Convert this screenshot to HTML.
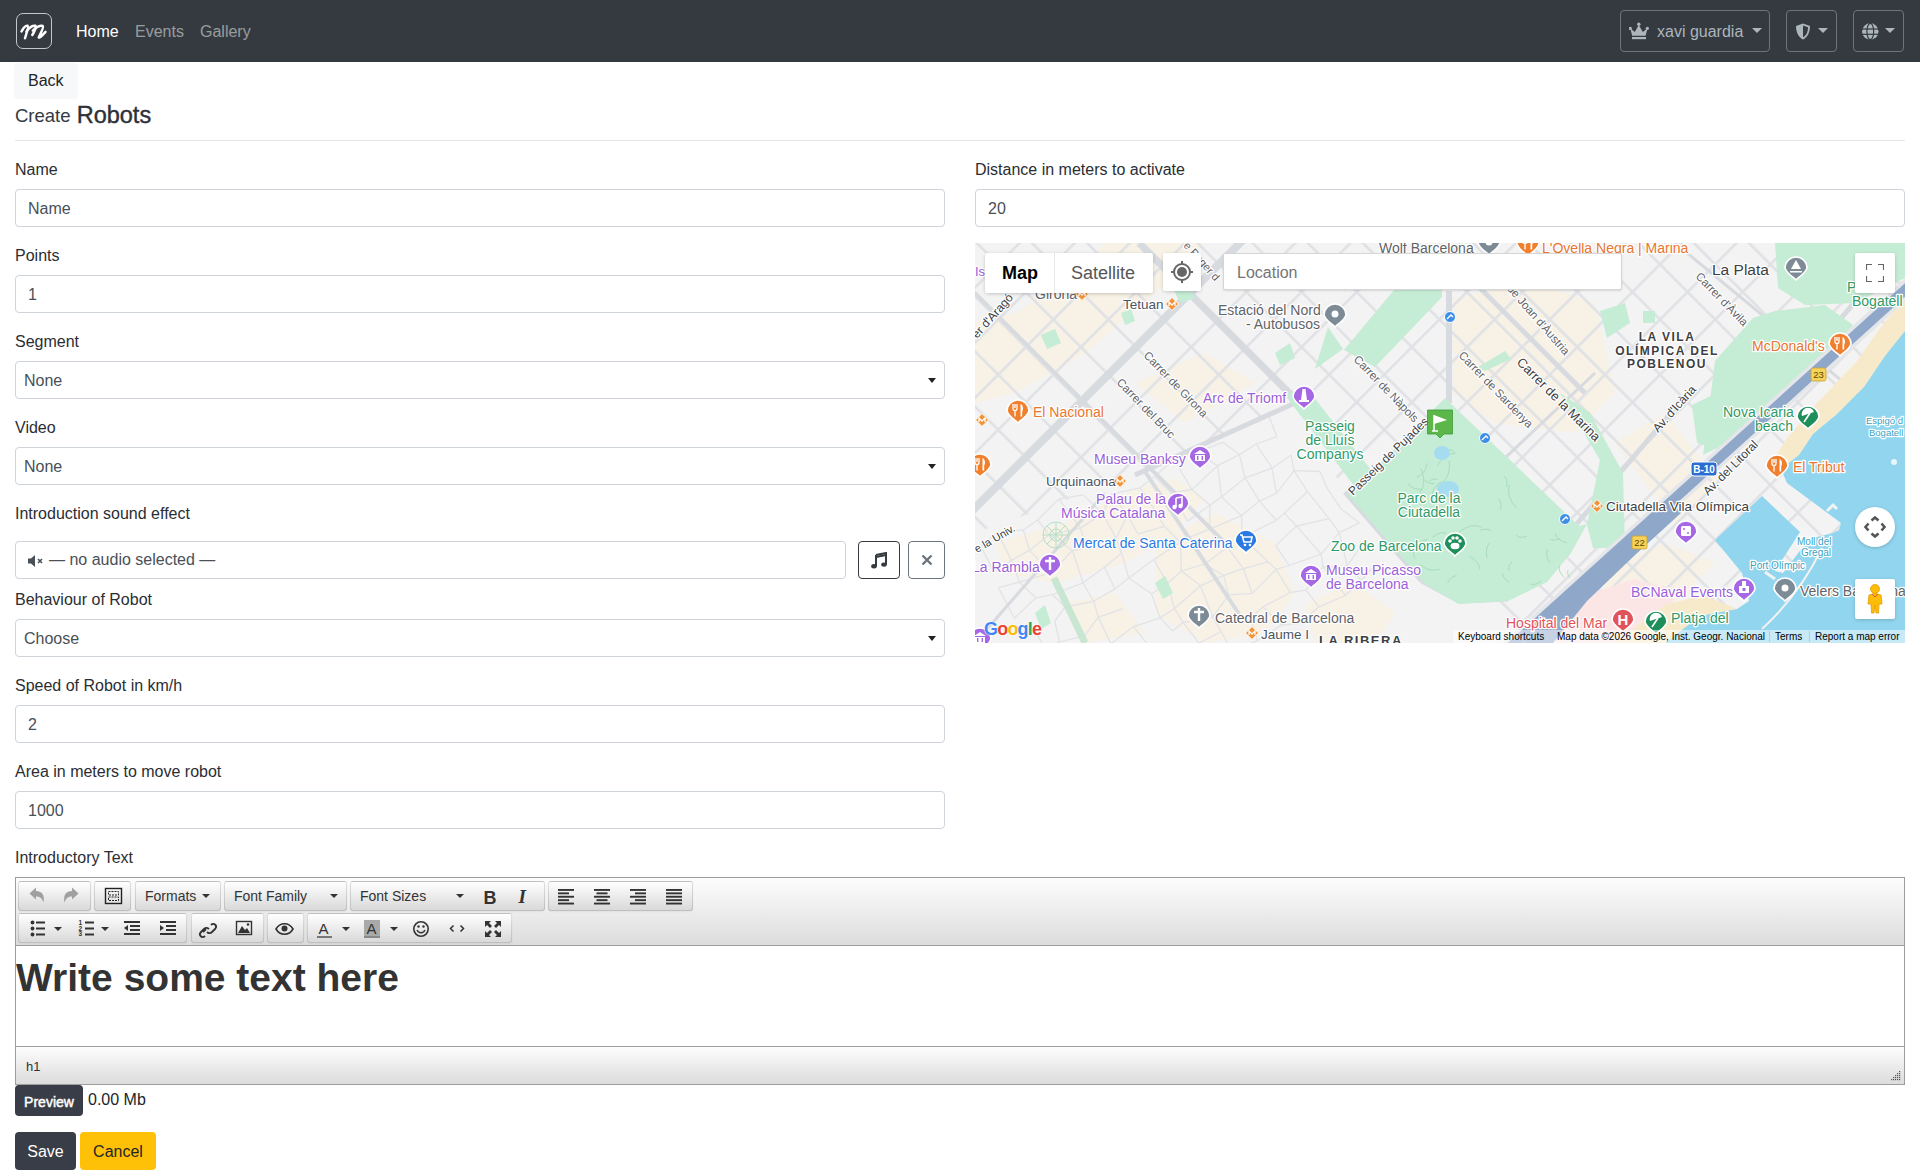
<!DOCTYPE html>
<html><head><meta charset="utf-8">
<style>
*{box-sizing:border-box;margin:0;padding:0}
html,body{width:1920px;height:1170px;overflow:hidden;background:#fff}
body{font-family:"Liberation Sans",sans-serif;color:#212529;font-size:16px;line-height:1.5;position:relative}
.abs{position:absolute}
#nav{position:absolute;left:0;top:0;width:1920px;height:62px;background:#343a40}
.logo{position:absolute;left:16px;top:13px;width:36px;height:36px;border:1.3px solid #c3c6ca;border-radius:7px}
.nl{position:absolute;top:20px;font-size:16px;line-height:24px;color:rgba(255,255,255,.5)}
.nbtn{position:absolute;top:10px;height:42px;border:1px solid #6c757d;border-radius:4px;color:#adb5bd}
.caret{position:absolute;width:0;height:0;border-left:5px solid transparent;border-right:5px solid transparent;border-top:5px solid #adb5bd}
.lbl{position:absolute;left:15px;font-size:16px;line-height:24px;color:#2a2e33;padding-top:1px}
.inp{position:absolute;height:38px;border:1px solid #ced4da;border-radius:4px;background:#fff;font-size:16px;line-height:24px;color:#495057;padding:7px 12px 5px 12px}
.sel{padding-left:8px}
.sarrow{position:absolute;right:8px;top:16px;width:0;height:0;border-left:4px solid transparent;border-right:4px solid transparent;border-top:5px solid #222}
</style></head><body>
<div id="nav">
  <div class="logo"><svg class="abs" style="left:-1px;top:-1px" width="36" height="36" viewBox="0 0 36 36"><g fill="none" stroke="#fff" stroke-linecap="round" stroke-width="2.5"><path d="M5.5,18.5 C7.5,14.5 10,12.2 11.8,12.8 C12.8,13.4 10.8,19.5 9,25.2"/><path d="M10.5,18.5 C13,14.5 17,12 19.5,12.8 C20.8,13.6 18.2,19 16.3,22"/><path d="M16.8,17.5 C20,14 24.5,12 26.8,13 C28.3,14 24.2,21 22.8,24.3 C23.5,25.5 26,22.5 29.5,18.8"/></g></svg></div>
  <div class="nl" style="left:76px;color:#fff">Home</div>
  <div class="nl" style="left:135px">Events</div>
  <div class="nl" style="left:200px">Gallery</div>
  <div class="nbtn" style="left:1620px;width:150px">
    <svg class="abs" style="left:8px;top:11px" width="21" height="18" viewBox="0 0 21 18"><path d="M1.2,6.3 L5.8,10 L9.8,3 L13.8,10 L18.5,6.3 L16.6,13.8 L3.2,13.8 Z" fill="#adb5bd"/><circle cx="1.3" cy="6.3" r="1.6" fill="#adb5bd"/><circle cx="9.8" cy="2.2" r="1.7" fill="#adb5bd"/><circle cx="18.4" cy="6.3" r="1.6" fill="#adb5bd"/><rect x="3" y="15" width="14" height="2.2" fill="#adb5bd"/></svg>
    <div class="abs" style="left:36px;top:9px;font-size:16px;line-height:24px">xavi guardia</div>
    <div class="caret" style="left:131px;top:17px"></div>
  </div>
  <div class="nbtn" style="left:1786px;width:51px">
    <svg class="abs" style="left:8px;top:11.5px" width="16" height="17" viewBox="0 0 16 17"><path d="M8 0.5 L15 3 C15 10 12 14.5 8 16.5 C4 14.5 1 10 1 3 Z" fill="#adb5bd"/><path d="M8 2.5 L13 4.3 C13 9.5 11 12.8 8 14.3 Z" fill="#343a40"/></svg>
    <div class="caret" style="left:31px;top:17px"></div>
  </div>
  <div class="nbtn" style="left:1853px;width:51px">
    <svg class="abs" style="left:8px;top:11.5px" width="17" height="17" viewBox="0 0 17 17"><circle cx="8.3" cy="8.5" r="8.2" fill="#adb5bd"/><g stroke="#343a40" stroke-width="1.2" fill="none"><ellipse cx="8.3" cy="8.5" rx="3.4" ry="8.2"/><line x1="0" y1="6" x2="17" y2="6"/><line x1="0" y1="11.3" x2="17" y2="11.3"/></g></svg>
    <div class="caret" style="left:31px;top:17px"></div>
  </div>
</div>

<div class="abs" style="left:14px;top:63px;width:64px;height:36px;background:#f7f8fa;border-radius:4px"></div>
<div class="abs" style="left:28px;top:69px;font-size:16px;line-height:24px;color:#212529">Back</div>
<div class="abs" style="left:15px;top:100px;font-size:18.5px;line-height:28px;color:#343a40;white-space:nowrap">Create <span style="font-size:23.5px;color:#2d3137;-webkit-text-stroke:0.4px #2d3137;position:relative;top:1px;left:1px">Robots</span></div>
<div class="abs" style="left:15px;top:140px;width:1890px;height:1px;background:#e3e5e7"></div>

<!-- left column -->
<div class="lbl" style="top:157px">Name</div>
<div class="inp" style="left:15px;top:189px;width:930px">Name</div>
<div class="lbl" style="top:243px">Points</div>
<div class="inp" style="left:15px;top:275px;width:930px">1</div>
<div class="lbl" style="top:329px">Segment</div>
<div class="inp sel" style="left:15px;top:361px;width:930px">None<span class="sarrow"></span></div>
<div class="lbl" style="top:415px">Video</div>
<div class="inp sel" style="left:15px;top:447px;width:930px">None<span class="sarrow"></span></div>
<div class="lbl" style="top:501px">Introduction sound effect</div>
<div class="inp" style="left:15px;top:541px;width:831px;padding-left:12px">
  <svg class="abs" style="left:12px;top:13px" width="17" height="12" viewBox="0 0 17 12"><path d="M0 3.5 H3 L7 0 V12 L3 8.5 H0 Z" fill="#495057"/><path d="M10 4 L14 8 M14 4 L10 8" stroke="#495057" stroke-width="1.6"/></svg>
  <span style="position:absolute;left:33px;top:6px">— no audio selected —</span>
</div>
<div class="abs" style="left:858px;top:541px;width:42px;height:38px;border:1px solid #343a40;border-radius:4px">
  <svg class="abs" style="left:12px;top:10px" width="17" height="17" viewBox="0 0 17 17"><path d="M5 3 L15 1 V12.5" fill="none" stroke="#343a40" stroke-width="2"/><path d="M5 3 V14" stroke="#343a40" stroke-width="2"/><ellipse cx="3" cy="14.2" rx="2.8" ry="2.2" fill="#343a40"/><ellipse cx="13" cy="12.6" rx="2.8" ry="2.2" fill="#343a40"/><path d="M5 5 L15 3" stroke="#343a40" stroke-width="2"/></svg>
</div>
<div class="abs" style="left:908px;top:541px;width:37px;height:38px;border:1px solid #6c757d;border-radius:4px">
  <svg class="abs" style="left:12px;top:12px" width="12" height="12" viewBox="0 0 12 12"><path d="M1.5 1.5 L10.5 10.5 M10.5 1.5 L1.5 10.5" stroke="#6c757d" stroke-width="2.4"/></svg>
</div>
<div class="lbl" style="top:587px">Behaviour of Robot</div>
<div class="inp sel" style="left:15px;top:619px;width:930px">Choose<span class="sarrow"></span></div>
<div class="lbl" style="top:673px">Speed of Robot in km/h</div>
<div class="inp" style="left:15px;top:705px;width:930px">2</div>
<div class="lbl" style="top:759px">Area in meters to move robot</div>
<div class="inp" style="left:15px;top:791px;width:930px">1000</div>
<div class="lbl" style="top:845px">Introductory Text</div>

<!-- right column -->
<div class="lbl" style="left:975px;top:157px">Distance in meters to activate</div>
<div class="inp" style="left:975px;top:189px;width:930px">20</div>

<div id="map" class="abs" style="left:975px;top:243px;width:930px;height:400px;background:#f1f2f3;overflow:hidden">
<svg width="930" height="400" viewBox="0 0 930 400" style="position:absolute;left:0;top:0;font-family:'Liberation Sans',sans-serif">
<defs>
<pattern id="grid" width="39" height="39" patternUnits="userSpaceOnUse" patternTransform="rotate(-45) translate(0,30.2)">
<rect x="0" y="0" width="39" height="2.6" fill="#dfe1e5"/>
<rect x="0" y="0" width="2.6" height="39" fill="#dfe1e5"/>
</pattern>
<clipPath id="eix"><polygon points="0,0 930,0 930,400 560,400 470,300 372,253 320,160 160,232 0,290"/></clipPath>
</defs>
<rect width="930" height="400" fill="#f4f3f3"/>
<g fill="#fbf1da" opacity="0.5">
<polygon points="0,80 40,70 90,40 130,0 230,0 180,50 110,110 40,150 0,160"/>
<polygon points="20,300 90,280 150,250 200,235 230,255 200,290 150,320 80,340 30,330"/>
<polygon points="180,300 240,270 300,300 320,350 290,390 230,400 180,370"/>
<polygon points="330,360 380,340 420,370 400,400 340,400"/>
<polygon points="90,360 140,350 170,390 110,400"/>
<polygon points="478,55 560,40 620,60 640,150 600,190 520,180 478,150"/>
<polygon points="640,200 690,170 745,240 700,280"/>
<polygon points="160,140 230,110 280,140 210,180"/>
<polygon points="820,190 870,150 900,130 860,200"/>
<polygon points="620,330 690,300 740,320 700,360 640,360"/>
</g>
<rect width="930" height="400" fill="url(#grid)" clip-path="url(#eix)"/>
<g stroke="#e1e3e6" stroke-width="1.3" fill="none">
<line x1="6.0" y1="303.6" x2="22.3" y2="289.1"/>
<line x1="6.0" y1="303.6" x2="19.0" y2="329.0"/>
<line x1="19.0" y1="329.0" x2="36.4" y2="317.4"/>
<line x1="23.6" y1="344.7" x2="44.3" y2="339.2"/>
<line x1="23.6" y1="344.7" x2="39.3" y2="375.3"/>
<line x1="39.3" y1="375.3" x2="60.9" y2="354.8"/>
<line x1="58.2" y1="385.5" x2="70.6" y2="406.0"/>
<line x1="70.6" y1="406.0" x2="84.6" y2="398.8"/>
<line x1="22.3" y1="289.1" x2="48.3" y2="287.0"/>
<line x1="22.3" y1="289.1" x2="36.4" y2="317.4"/>
<line x1="36.4" y1="317.4" x2="54.5" y2="307.4"/>
<line x1="36.4" y1="317.4" x2="44.3" y2="339.2"/>
<line x1="44.3" y1="339.2" x2="76.2" y2="329.7"/>
<line x1="44.3" y1="339.2" x2="60.9" y2="354.8"/>
<line x1="60.9" y1="354.8" x2="77.5" y2="351.7"/>
<line x1="79.7" y1="378.0" x2="90.3" y2="364.0"/>
<line x1="79.7" y1="378.0" x2="84.6" y2="398.8"/>
<line x1="84.6" y1="398.8" x2="109.6" y2="392.9"/>
<line x1="48.3" y1="287.0" x2="62.6" y2="277.0"/>
<line x1="48.3" y1="287.0" x2="54.5" y2="307.4"/>
<line x1="54.5" y1="307.4" x2="74.2" y2="291.8"/>
<line x1="54.5" y1="307.4" x2="76.2" y2="329.7"/>
<line x1="76.2" y1="329.7" x2="97.5" y2="307.5"/>
<line x1="77.5" y1="351.7" x2="108.0" y2="339.8"/>
<line x1="77.5" y1="351.7" x2="90.3" y2="364.0"/>
<line x1="90.3" y1="364.0" x2="118.6" y2="358.3"/>
<line x1="90.3" y1="364.0" x2="109.6" y2="392.9"/>
<line x1="109.6" y1="392.9" x2="123.3" y2="374.1"/>
<line x1="62.6" y1="277.0" x2="83.8" y2="256.0"/>
<line x1="62.6" y1="277.0" x2="74.2" y2="291.8"/>
<line x1="74.2" y1="291.8" x2="105.5" y2="285.1"/>
<line x1="74.2" y1="291.8" x2="97.5" y2="307.5"/>
<line x1="97.5" y1="307.5" x2="111.6" y2="304.7"/>
<line x1="97.5" y1="307.5" x2="108.0" y2="339.8"/>
<line x1="108.0" y1="339.8" x2="129.4" y2="324.2"/>
<line x1="108.0" y1="339.8" x2="118.6" y2="358.3"/>
<line x1="118.6" y1="358.3" x2="139.9" y2="345.9"/>
<line x1="118.6" y1="358.3" x2="123.3" y2="374.1"/>
<line x1="123.3" y1="374.1" x2="147.7" y2="365.9"/>
<line x1="123.3" y1="374.1" x2="135.9" y2="400.7"/>
<line x1="135.9" y1="400.7" x2="158.5" y2="383.6"/>
<line x1="83.8" y1="256.0" x2="108.3" y2="251.9"/>
<line x1="83.8" y1="256.0" x2="105.5" y2="285.1"/>
<line x1="105.5" y1="285.1" x2="127.5" y2="270.6"/>
<line x1="105.5" y1="285.1" x2="111.6" y2="304.7"/>
<line x1="111.6" y1="304.7" x2="141.0" y2="295.1"/>
<line x1="129.4" y1="324.2" x2="146.6" y2="309.9"/>
<line x1="129.4" y1="324.2" x2="139.9" y2="345.9"/>
<line x1="139.9" y1="345.9" x2="153.7" y2="335.0"/>
<line x1="158.5" y1="383.6" x2="185.0" y2="374.9"/>
<line x1="158.5" y1="383.6" x2="177.3" y2="407.3"/>
<line x1="108.3" y1="251.9" x2="127.5" y2="270.6"/>
<line x1="127.5" y1="270.6" x2="136.9" y2="250.8"/>
<line x1="127.5" y1="270.6" x2="141.0" y2="295.1"/>
<line x1="141.0" y1="295.1" x2="152.6" y2="272.2"/>
<line x1="141.0" y1="295.1" x2="146.6" y2="309.9"/>
<line x1="146.6" y1="309.9" x2="153.7" y2="335.0"/>
<line x1="153.7" y1="335.0" x2="178.7" y2="316.6"/>
<line x1="153.7" y1="335.0" x2="176.5" y2="350.7"/>
<line x1="176.5" y1="350.7" x2="192.7" y2="340.3"/>
<line x1="176.5" y1="350.7" x2="185.0" y2="374.9"/>
<line x1="185.0" y1="374.9" x2="199.5" y2="365.5"/>
<line x1="185.0" y1="374.9" x2="197.6" y2="388.0"/>
<line x1="197.6" y1="388.0" x2="208.1" y2="379.3"/>
<line x1="136.9" y1="250.8" x2="165.3" y2="244.8"/>
<line x1="136.9" y1="250.8" x2="152.6" y2="272.2"/>
<line x1="152.6" y1="272.2" x2="182.3" y2="271.3"/>
<line x1="152.6" y1="272.2" x2="162.8" y2="291.0"/>
<line x1="162.8" y1="291.0" x2="189.4" y2="283.4"/>
<line x1="178.7" y1="316.6" x2="205.4" y2="299.3"/>
<line x1="178.7" y1="316.6" x2="192.7" y2="340.3"/>
<line x1="192.7" y1="340.3" x2="206.4" y2="328.0"/>
<line x1="192.7" y1="340.3" x2="199.5" y2="365.5"/>
<line x1="199.5" y1="365.5" x2="225.5" y2="342.8"/>
<line x1="199.5" y1="365.5" x2="208.1" y2="379.3"/>
<line x1="208.1" y1="379.3" x2="237.7" y2="374.1"/>
<line x1="208.1" y1="379.3" x2="224.0" y2="400.2"/>
<line x1="224.0" y1="400.2" x2="246.2" y2="388.5"/>
<line x1="165.3" y1="244.8" x2="179.4" y2="233.6"/>
<line x1="165.3" y1="244.8" x2="182.3" y2="271.3"/>
<line x1="182.3" y1="271.3" x2="189.4" y2="283.4"/>
<line x1="189.4" y1="283.4" x2="205.4" y2="299.3"/>
<line x1="205.4" y1="299.3" x2="213.9" y2="294.7"/>
<line x1="205.4" y1="299.3" x2="206.4" y2="328.0"/>
<line x1="206.4" y1="328.0" x2="229.5" y2="321.2"/>
<line x1="206.4" y1="328.0" x2="225.5" y2="342.8"/>
<line x1="225.5" y1="342.8" x2="248.7" y2="332.3"/>
<line x1="225.5" y1="342.8" x2="237.7" y2="374.1"/>
<line x1="237.7" y1="374.1" x2="253.5" y2="351.8"/>
<line x1="237.7" y1="374.1" x2="246.2" y2="388.5"/>
<line x1="246.2" y1="388.5" x2="256.1" y2="407.3"/>
<line x1="256.1" y1="407.3" x2="282.2" y2="397.8"/>
<line x1="179.4" y1="233.6" x2="199.0" y2="216.5"/>
<line x1="179.4" y1="233.6" x2="195.9" y2="249.8"/>
<line x1="195.9" y1="249.8" x2="216.9" y2="246.5"/>
<line x1="195.9" y1="249.8" x2="212.7" y2="278.1"/>
<line x1="212.7" y1="278.1" x2="234.9" y2="262.1"/>
<line x1="213.9" y1="294.7" x2="234.7" y2="286.2"/>
<line x1="213.9" y1="294.7" x2="229.5" y2="321.2"/>
<line x1="229.5" y1="321.2" x2="252.5" y2="304.1"/>
<line x1="229.5" y1="321.2" x2="248.7" y2="332.3"/>
<line x1="248.7" y1="332.3" x2="268.4" y2="325.7"/>
<line x1="248.7" y1="332.3" x2="253.5" y2="351.8"/>
<line x1="253.5" y1="351.8" x2="277.2" y2="350.4"/>
<line x1="275.6" y1="374.5" x2="287.9" y2="363.9"/>
<line x1="275.6" y1="374.5" x2="282.2" y2="397.8"/>
<line x1="282.2" y1="397.8" x2="306.4" y2="382.0"/>
<line x1="199.0" y1="216.5" x2="221.4" y2="209.1"/>
<line x1="199.0" y1="216.5" x2="216.9" y2="246.5"/>
<line x1="216.9" y1="246.5" x2="242.6" y2="222.7"/>
<line x1="216.9" y1="246.5" x2="234.9" y2="262.1"/>
<line x1="234.9" y1="262.1" x2="246.5" y2="254.0"/>
<line x1="234.9" y1="262.1" x2="234.7" y2="286.2"/>
<line x1="234.7" y1="286.2" x2="266.4" y2="272.6"/>
<line x1="234.7" y1="286.2" x2="252.5" y2="304.1"/>
<line x1="252.5" y1="304.1" x2="268.4" y2="325.7"/>
<line x1="268.4" y1="325.7" x2="293.0" y2="318.8"/>
<line x1="268.4" y1="325.7" x2="277.2" y2="350.4"/>
<line x1="277.2" y1="350.4" x2="301.1" y2="326.3"/>
<line x1="287.9" y1="363.9" x2="315.1" y2="349.5"/>
<line x1="287.9" y1="363.9" x2="306.4" y2="382.0"/>
<line x1="306.4" y1="382.0" x2="324.3" y2="380.5"/>
<line x1="221.4" y1="209.1" x2="248.1" y2="199.3"/>
<line x1="221.4" y1="209.1" x2="242.6" y2="222.7"/>
<line x1="242.6" y1="222.7" x2="264.4" y2="211.6"/>
<line x1="242.6" y1="222.7" x2="246.5" y2="254.0"/>
<line x1="246.5" y1="254.0" x2="270.1" y2="234.9"/>
<line x1="246.5" y1="254.0" x2="266.4" y2="272.6"/>
<line x1="266.4" y1="272.6" x2="284.5" y2="258.1"/>
<line x1="266.4" y1="272.6" x2="267.6" y2="294.2"/>
<line x1="267.6" y1="294.2" x2="301.2" y2="277.3"/>
<line x1="267.6" y1="294.2" x2="293.0" y2="318.8"/>
<line x1="293.0" y1="318.8" x2="301.1" y2="326.3"/>
<line x1="301.1" y1="326.3" x2="314.2" y2="322.5"/>
<line x1="301.1" y1="326.3" x2="315.1" y2="349.5"/>
<line x1="315.1" y1="349.5" x2="331.1" y2="347.2"/>
<line x1="324.3" y1="380.5" x2="343.8" y2="363.9"/>
<line x1="248.1" y1="199.3" x2="264.4" y2="211.6"/>
<line x1="264.4" y1="211.6" x2="281.2" y2="201.0"/>
<line x1="264.4" y1="211.6" x2="270.1" y2="234.9"/>
<line x1="270.1" y1="234.9" x2="297.1" y2="225.2"/>
<line x1="270.1" y1="234.9" x2="284.5" y2="258.1"/>
<line x1="284.5" y1="258.1" x2="301.4" y2="250.4"/>
<line x1="284.5" y1="258.1" x2="301.2" y2="277.3"/>
<line x1="301.2" y1="277.3" x2="309.3" y2="270.2"/>
<line x1="300.8" y1="302.6" x2="321.6" y2="283.0"/>
<line x1="300.8" y1="302.6" x2="314.2" y2="322.5"/>
<line x1="314.2" y1="322.5" x2="346.2" y2="311.2"/>
<line x1="331.1" y1="347.2" x2="348.0" y2="324.0"/>
<line x1="331.1" y1="347.2" x2="343.8" y2="363.9"/>
<line x1="343.8" y1="363.9" x2="370.5" y2="352.5"/>
<line x1="281.2" y1="201.0" x2="301.9" y2="193.7"/>
<line x1="281.2" y1="201.0" x2="297.1" y2="225.2"/>
<line x1="297.1" y1="225.2" x2="316.0" y2="212.0"/>
<line x1="297.1" y1="225.2" x2="301.4" y2="250.4"/>
<line x1="301.4" y1="250.4" x2="319.0" y2="227.7"/>
<line x1="309.3" y1="270.2" x2="332.5" y2="248.6"/>
<line x1="309.3" y1="270.2" x2="321.6" y2="283.0"/>
<line x1="321.6" y1="283.0" x2="354.1" y2="275.6"/>
<line x1="321.6" y1="283.0" x2="346.2" y2="311.2"/>
<line x1="346.2" y1="311.2" x2="364.3" y2="289.6"/>
<line x1="346.2" y1="311.2" x2="348.0" y2="324.0"/>
<line x1="348.0" y1="324.0" x2="372.2" y2="322.9"/>
<line x1="348.0" y1="324.0" x2="370.5" y2="352.5"/>
<line x1="370.5" y1="352.5" x2="386.3" y2="337.2"/>
<line x1="293.6" y1="172.2" x2="301.9" y2="193.7"/>
<line x1="316.0" y1="212.0" x2="319.0" y2="227.7"/>
<line x1="319.0" y1="227.7" x2="345.0" y2="228.5"/>
<line x1="319.0" y1="227.7" x2="332.5" y2="248.6"/>
<line x1="332.5" y1="248.6" x2="354.1" y2="275.6"/>
<line x1="354.1" y1="275.6" x2="364.3" y2="289.6"/>
<line x1="364.3" y1="289.6" x2="384.6" y2="279.9"/>
<line x1="364.3" y1="289.6" x2="372.2" y2="322.9"/>
<line x1="372.2" y1="322.9" x2="389.2" y2="298.8"/>
<line x1="372.2" y1="322.9" x2="386.3" y2="337.2"/>
<line x1="386.3" y1="337.2" x2="401.6" y2="320.3"/>
<line x1="345.0" y1="228.5" x2="352.1" y2="245.4"/>
<line x1="352.1" y1="245.4" x2="366.5" y2="266.3"/>
<line x1="366.5" y1="266.3" x2="384.6" y2="279.9"/>
</g>
<g stroke="#d7dadf" fill="none">
<line x1="-20" y1="285" x2="285" y2="-20" stroke-width="8"/>
<line x1="164" y1="0" x2="334" y2="170" stroke-width="7"/>
<line x1="-10" y1="40" x2="250" y2="300" stroke-width="4"/>
<line x1="160" y1="232" x2="320" y2="160" stroke-width="5"/>
<line x1="169" y1="227" x2="264" y2="371" stroke-width="4"/>
<line x1="474" y1="48" x2="474" y2="160" stroke-width="6"/>
<line x1="600" y1="283" x2="700" y2="165" stroke-width="5"/>
<line x1="440" y1="300" x2="620" y2="130" stroke-width="3"/>
<line x1="930" y1="0" x2="760" y2="200" stroke-width="5"/>
<line x1="490" y1="30" x2="610" y2="150" stroke-width="5"/>
<line x1="0" y1="400" x2="130" y2="250" stroke-width="3"/>
<line x1="700" y1="0" x2="930" y2="190" stroke-width="3"/>
<line x1="370" y1="249" x2="447" y2="338" stroke-width="5"/>
<line x1="447" y1="338" x2="484" y2="358" stroke-width="5"/>
<line x1="484" y1="358" x2="533" y2="356" stroke-width="5"/>
</g>
<line x1="79" y1="335" x2="110" y2="400" stroke="#c9e6d3" stroke-width="7"/>
<g fill="none" stroke="#b6e0c4" stroke-width="1"><circle cx="81" cy="292" r="13"/><circle cx="81" cy="292" r="6"/><path d="M68,292 H94 M81,279 V305 M72,283 L90,301 M90,283 L72,301"/></g>
<g fill="#c5ecd4">
<polygon points="470,155 604,283 612,281 596,310 572,339 533,358 484,361 450,341 373,252"/>
<polygon points="310,152 330,143 400,232 383,248"/>
<polygon points="419,47 467,47 467,54 400,124 369,107"/>
<polygon points="340,126 353,84 368,106"/>
<polygon points="585,150 615,170 648,230 650,305 618,305 612,282 625,217"/>
<polygon points="800,0 930,0 930,35 880,60 830,62 803,45"/>
<polygon points="740,118 778,75 800,68 850,62 878,82 840,130 794,165 752,200 728,212"/>
<polygon points="717,162 758,142 788,175 760,211 722,200"/>
<polygon points="625,68 650,60 655,80 632,95"/>
<polygon points="668,68 680,68 680,80 668,80"/>
<polygon points="503,124 530,108 536,116 510,128"/>
<polygon points="66,92 80,86 86,100 72,106"/>
<polygon points="146,70 156,66 160,78 150,82"/>
<polygon points="198,45 210,40 220,55 205,60"/>
<polygon points="300,110 315,100 320,115 305,122"/>
<polygon points="60,370 70,362 76,380 66,386"/>
<polygon points="180,340 190,333 198,350 188,356"/>
</g>
<g fill="none" stroke="#9fd8b4" stroke-width="0.8">
<path d="M506.9,284.0 q-11.0,-4.4 -23.2,5.1"/>
<path d="M516.3,288.1 q-4.3,-3.5 -11.1,-0.8"/>
<path d="M537.1,318.9 q-3.9,2.8 -3.2,9.1"/>
<path d="M445.4,321.4 q6.4,7.5 19.1,5.1"/>
<path d="M541.2,292.3 q4.1,3.4 10.6,1.0"/>
<path d="M462.3,236.3 q-4.0,-1.6 -8.3,1.9"/>
<path d="M504.9,326.4 q-0.8,-8.4 -10.7,-13.0"/>
<path d="M515.0,299.4 q-5.5,5.6 -2.8,15.5"/>
<path d="M572.8,306.2 q-3.0,5.9 1.7,13.3"/>
<path d="M479.1,210.5 q-10.5,0.3 -17.0,12.3"/>
<path d="M592.9,327.1 q-1.4,3.8 2.0,7.8"/>
<path d="M442.4,294.4 q-7.0,8.0 -2.6,21.1"/>
<path d="M444.8,249.9 q7.4,-9.7 1.2,-24.4"/>
<path d="M450.1,237.0 q2.7,4.0 9.0,3.6"/>
<path d="M525.1,267.1 q2.6,-5.0 -1.3,-11.2"/>
<path d="M452.3,296.6 q-5.0,-0.5 -8.8,4.8"/>
<path d="M466.2,240.5 q9.9,-7.3 8.1,-23.1"/>
<path d="M481.7,332.7 q-5.8,0.4 -9.1,7.1"/>
<path d="M575.2,296.3 q4.2,2.5 9.7,-0.7"/>
<path d="M466.3,238.7 q-9.4,4.8 -10.1,18.6"/>
<path d="M480.4,211.0 q-2.1,-4.3 -8.3,-4.7"/>
<path d="M471.3,290.2 q-6.8,-2.2 -13.7,4.1"/>
<path d="M527.7,330.0 q0.0,5.6 6.3,9.2"/>
<path d="M584.4,322.7 q-1.3,6.0 4.5,11.4"/>
<path d="M555.7,341.1 q5.4,1.6 10.8,-3.5"/>
<path d="M580.0,290.5 q2.4,7.2 12.0,9.2"/>
<path d="M470.5,305.7 q5.4,-3.0 5.5,-11.1"/>
<path d="M531.4,244.0 q2.2,-5.0 -2.0,-10.8"/>
<path d="M441.7,234.3 q8.3,-2.8 10.5,-14.0"/>
<path d="M534.4,242.0 q-3.6,11.2 6.7,22.6"/>
<path d="M432.8,240.4 q4.3,6.5 14.5,5.8"/>
</g>
<polygon points="560,400 610,352 660,336 700,346 690,400" fill="#fbe6e5"/>
<g fill="#f7eacb">
<polygon points="930,55 930,92 910,113 889,144 862,171 838,191 824,212 806,226 795,222 812,195 842,160 882,118 905,85"/>
<polygon points="640,400 690,362 728,352 762,366 725,373 690,400"/>
</g>
<polygon points="930,88 910,113 889,144 862,171 838,191 824,212 806,226 812,240 866,280 864,287 858,290 834,296 808,330 800,328 825,289 787,253 740,297 767,330 774,358 762,366 725,373 690,400 930,400" fill="#91d5ee"/>
<path d="M852,268 L858,262 L862,266" stroke="#f2f2f2" stroke-width="3" fill="none"/>
<path d="M847,305 C835,330 815,360 787,386" stroke="#f2f2f2" stroke-width="2" fill="none"/>
<path d="M790,329 L800,336" stroke="#f2f2f2" stroke-width="3"/>
<line x1="520" y1="418" x2="940" y2="38" stroke="#e4e6e9" stroke-width="17"/>
<line x1="520" y1="418" x2="940" y2="38" stroke="#8fa7c8" stroke-width="10"/>
<polygon points="548,400 596,350 650,300 700,262 706,270 660,312 612,358 578,400" fill="#8fa7c8"/>
<g fill="#a5dcf0"><ellipse cx="467" cy="210" rx="8" ry="7"/><ellipse cx="473" cy="246" rx="11" ry="8"/></g>
</svg>
<svg width="930" height="400" viewBox="0 0 930 400" style="position:absolute;left:0;top:0;font-family:'Liberation Sans',sans-serif">
<g style="paint-order:stroke" stroke="#fff" stroke-width="2.5" stroke-linejoin="round">
<text x="404" y="10" font-size="14" fill="#5f6368" text-anchor="start" >Wolf Barcelona</text>
<text x="567" y="10" font-size="14" fill="#e8762f" text-anchor="start" >L'Ovella Negra | Marina</text>
<text x="60" y="56" font-size="14" fill="#5f6368" text-anchor="start" >Girona</text>
<text x="148" y="66" font-size="13.5" fill="#4a5562" text-anchor="start" >Tetuan</text>
<text x="243" y="72" font-size="14" fill="#5f6368" text-anchor="start" >Estació del Nord</text>
<text x="271" y="86" font-size="14" fill="#5f6368" text-anchor="start" >- Autobusos</text>
<text x="737" y="32" font-size="15.5" fill="#3c4043" text-anchor="start" >La Plata</text>
<text x="692" y="98" font-size="12" fill="#3c4043" text-anchor="middle" letter-spacing="1.5" font-weight="bold">LA VILA</text>
<text x="692" y="112" font-size="12" fill="#3c4043" text-anchor="middle" letter-spacing="1.5" font-weight="bold">OLÍMPICA DEL</text>
<text x="692" y="125" font-size="12" fill="#3c4043" text-anchor="middle" letter-spacing="1.5" font-weight="bold">POBLENOU</text>
<text x="777" y="108" font-size="14" fill="#e8762f" text-anchor="start" >McDonald's</text>
<text x="872" y="49" font-size="14" fill="#2f9a66" text-anchor="start" >P</text>
<text x="877" y="63" font-size="14" fill="#2f9a66" text-anchor="start" >Bogatell</text>
<text x="58" y="174" font-size="14" fill="#e8762f" text-anchor="start" >El Nacional</text>
<text x="228" y="160" font-size="14" fill="#9b5fd9" text-anchor="start" >Arc de Triomf</text>
<text x="355" y="188" font-size="14" fill="#2f9a66" text-anchor="middle" >Passeig</text>
<text x="355" y="202" font-size="14" fill="#2f9a66" text-anchor="middle" >de Lluís</text>
<text x="355" y="216" font-size="14" fill="#2f9a66" text-anchor="middle" >Companys</text>
<text x="119" y="221" font-size="14" fill="#9b5fd9" text-anchor="start" >Museu Banksy</text>
<text x="71" y="243" font-size="13.5" fill="#4a5562" text-anchor="start" >Urquinaona</text>
<text x="121" y="261" font-size="14" fill="#9b5fd9" text-anchor="start" >Palau de la</text>
<text x="86" y="275" font-size="14" fill="#9b5fd9" text-anchor="start" >Música Catalana</text>
<text x="98" y="305" font-size="14" fill="#2a7ae2" text-anchor="start" >Mercat de Santa Caterina</text>
<text x="-3" y="329" font-size="14" fill="#9b5fd9" text-anchor="start" >La Rambla</text>
<text x="240" y="380" font-size="14" fill="#5f6368" text-anchor="start" >Catedral de Barcelona</text>
<text x="286" y="396" font-size="13.5" fill="#4a5562" text-anchor="start" >Jaume I</text>
<text x="344" y="402" font-size="13" fill="#3c4043" text-anchor="start" letter-spacing="1.5" font-weight="bold">LA RIBERA</text>
<text x="356" y="308" font-size="14" fill="#2f9a66" text-anchor="start" >Zoo de Barcelona</text>
<text x="351" y="332" font-size="14" fill="#9b5fd9" text-anchor="start" >Museu Picasso</text>
<text x="351" y="346" font-size="14" fill="#9b5fd9" text-anchor="start" >de Barcelona</text>
<text x="454" y="260" font-size="14" fill="#2f9a66" text-anchor="middle" >Parc de la</text>
<text x="454" y="274" font-size="14" fill="#2f9a66" text-anchor="middle" >Ciutadella</text>
<text x="748" y="174" font-size="14" fill="#2f9a66" text-anchor="start" >Nova Icaria</text>
<text x="780" y="188" font-size="14" fill="#2f9a66" text-anchor="start" >beach</text>
<text x="818" y="229" font-size="14" fill="#e8762f" text-anchor="start" >El Tribut</text>
<text x="631" y="268" font-size="13.5" fill="#3c4043" text-anchor="start" >Ciutadella Vila Olímpica</text>
<text x="822" y="302" font-size="10" fill="#3c9fbf" text-anchor="start" >Moll del</text>
<text x="826" y="313" font-size="10" fill="#3c9fbf" text-anchor="start" >Gregal</text>
<text x="775" y="326" font-size="10" fill="#3c9fbf" text-anchor="start" >Port Olímpic</text>
<text x="656" y="354" font-size="14" fill="#9b5fd9" text-anchor="start" >BCNaval Events</text>
<text x="825" y="353" font-size="14" fill="#5f6368" text-anchor="start" >Velers Barcelona</text>
<text x="531" y="385" font-size="14" fill="#e2525a" text-anchor="start" >Hospital del Mar</text>
<text x="696" y="380" font-size="14" fill="#2f9a66" text-anchor="start" >Platja del</text>
<text x="891" y="181" font-size="9.5" fill="#3c9fbf" text-anchor="start" >Espigó d</text>
<text x="894" y="193" font-size="9.5" fill="#3c9fbf" text-anchor="start" >Bogatell</text>
<text x="0" y="33" font-size="13" fill="#9b5fd9" text-anchor="start" >Is</text>
<text x="378" y="253" font-size="12" fill="#3c4043" transform="rotate(-44 378 253)" >Passeig de Pujades</text>
<text x="378" y="117" font-size="11.5" fill="#5f6368" transform="rotate(46 378 117)" >Carrer de Nàpols</text>
<text x="483" y="113" font-size="11.5" fill="#5f6368" transform="rotate(46 483 113)" >Carrer de Sardenya</text>
<text x="541" y="120" font-size="13" fill="#3c4043" transform="rotate(45 541 120)" >Carrer de la Marina</text>
<text x="508" y="19" font-size="11.5" fill="#5f6368" transform="rotate(49 508 19)" >Carrer de Joan d'Àustria</text>
<text x="720" y="34" font-size="11.5" fill="#5f6368" transform="rotate(46 720 34)" >Carrer d'Àvila</text>
<text x="683" y="190" font-size="12" fill="#3c4043" transform="rotate(-48 683 190)" >Av. d'Icària</text>
<text x="733" y="253" font-size="12" fill="#3c4043" transform="rotate(-45 733 253)" >Av. del Litoral</text>
<text x="168" y="113" font-size="11.5" fill="#5f6368" transform="rotate(46 168 113)" >Carrer de Girona</text>
<text x="141" y="140" font-size="11.5" fill="#5f6368" transform="rotate(46 141 140)" >Carrer del Bruc</text>
<text x="2" y="96" font-size="12" fill="#3c4043" transform="rotate(-48 2 96)" >er d'Aragó</text>
<text x="2" y="310" font-size="11" fill="#3c4043" transform="rotate(-30 2 310)" >e la Univ.</text>
<text x="208" y="3" font-size="11" fill="#5f6368" transform="rotate(48 208 3)" >e Poger d</text>
</g>
<rect x="716" y="219" width="26" height="14" rx="3" fill="#2a6ccf" stroke="#fff" stroke-width="1"/><text x="729" y="230" font-size="10" fill="#fff" text-anchor="middle" font-weight="bold">B-10</text>
<rect x="836" y="125" width="15" height="13" rx="2" fill="#f7d25a" stroke="#c9a52f" stroke-width="0.8"/><text x="843.5" y="135" font-size="9.5" fill="#5a4a00" text-anchor="middle">23</text>
<rect x="657" y="293" width="15" height="13" rx="2" fill="#f7d25a" stroke="#c9a52f" stroke-width="0.8"/><text x="664.5" y="303" font-size="9.5" fill="#5a4a00" text-anchor="middle">22</text>
<g transform="translate(514,-1)">
<path d="M-11,1 A11,11 0 1,1 11,1 C9,7 4,9 0,13 C-4,9 -9,7 -11,1 Z" fill="#7d8b97" stroke="#fff" stroke-width="1.6"/>
<circle cx="0" cy="0" r="3.5" fill="#fff"/>
</g>
<g transform="translate(553,0)">
<path d="M-11,1 A11,11 0 1,1 11,1 C9,7 4,9 0,13 C-4,9 -9,7 -11,1 Z" fill="#f07f2e" stroke="#fff" stroke-width="1.6"/>
<path d="M-5,-6 V-2 C-5,0 -4.5,0.5 -3,0.5 C-1.5,0.5 -1,0 -1,-2 V-6 M-3,-6 V-2 M-3,0 V6.5" stroke="#fff" stroke-width="1.3" fill="none"/><path d="M2.5,6.5 V-6 C5.5,-5 5.5,0 4.2,1.5 V6.5 Z" fill="#fff"/>
</g>
<g transform="translate(360,71)">
<path d="M-11,1 A11,11 0 1,1 11,1 C9,7 4,9 0,13 C-4,9 -9,7 -11,1 Z" fill="#7d8b97" stroke="#fff" stroke-width="1.6"/>
<circle cx="0" cy="0" r="3.5" fill="#fff"/>
</g>
<g transform="translate(821,24)">
<path d="M-11,1 A11,11 0 1,1 11,1 C9,7 4,9 0,13 C-4,9 -9,7 -11,1 Z" fill="#7d8b97" stroke="#fff" stroke-width="1.6"/>
<path d="M0,-7 L5,2 H-5 Z M-6,4 H6 V5.5 H-6 Z" fill="#fff"/>
</g>
<g transform="translate(865,100)">
<path d="M-11,1 A11,11 0 1,1 11,1 C9,7 4,9 0,13 C-4,9 -9,7 -11,1 Z" fill="#f07f2e" stroke="#fff" stroke-width="1.6"/>
<path d="M-5,-6 V-2 C-5,0 -4.5,0.5 -3,0.5 C-1.5,0.5 -1,0 -1,-2 V-6 M-3,-6 V-2 M-3,0 V6.5" stroke="#fff" stroke-width="1.3" fill="none"/><path d="M2.5,6.5 V-6 C5.5,-5 5.5,0 4.2,1.5 V6.5 Z" fill="#fff"/>
</g>
<g transform="translate(329,153)">
<path d="M-11,1 A11,11 0 1,1 11,1 C9,7 4,9 0,13 C-4,9 -9,7 -11,1 Z" fill="#a667e4" stroke="#fff" stroke-width="1.6"/>
<path d="M-1.5,-7 H1.5 L3,4 H5 V6 H-5 V4 H-3 Z" fill="#fff"/>
</g>
<g transform="translate(43,167)">
<path d="M-11,1 A11,11 0 1,1 11,1 C9,7 4,9 0,13 C-4,9 -9,7 -11,1 Z" fill="#f07f2e" stroke="#fff" stroke-width="1.6"/>
<path d="M-5,-6 V-2 C-5,0 -4.5,0.5 -3,0.5 C-1.5,0.5 -1,0 -1,-2 V-6 M-3,-6 V-2 M-3,0 V6.5" stroke="#fff" stroke-width="1.3" fill="none"/><path d="M2.5,6.5 V-6 C5.5,-5 5.5,0 4.2,1.5 V6.5 Z" fill="#fff"/>
</g>
<g transform="translate(5,221)">
<path d="M-11,1 A11,11 0 1,1 11,1 C9,7 4,9 0,13 C-4,9 -9,7 -11,1 Z" fill="#f07f2e" stroke="#fff" stroke-width="1.6"/>
<path d="M-5,-6 V-2 C-5,0 -4.5,0.5 -3,0.5 C-1.5,0.5 -1,0 -1,-2 V-6 M-3,-6 V-2 M-3,0 V6.5" stroke="#fff" stroke-width="1.3" fill="none"/><path d="M2.5,6.5 V-6 C5.5,-5 5.5,0 4.2,1.5 V6.5 Z" fill="#fff"/>
</g>
<g transform="translate(225,213)">
<path d="M-11,1 A11,11 0 1,1 11,1 C9,7 4,9 0,13 C-4,9 -9,7 -11,1 Z" fill="#a667e4" stroke="#fff" stroke-width="1.6"/>
<path d="M-6,-2 L0,-6 L6,-2 Z M-5,-1 H5 V5 H-5 Z" fill="#fff"/><rect x="-3" y="0" width="1.4" height="4" fill="#a667e4"/><rect x="1.6" y="0" width="1.4" height="4" fill="#a667e4"/>
</g>
<g transform="translate(203,260)">
<path d="M-11,1 A11,11 0 1,1 11,1 C9,7 4,9 0,13 C-4,9 -9,7 -11,1 Z" fill="#a667e4" stroke="#fff" stroke-width="1.6"/>
<path d="M-2,-5 L4,-6 V3" stroke="#fff" stroke-width="1.6" fill="none"/><path d="M-2,-5 V4" stroke="#fff" stroke-width="1.6"/><circle cx="-3.5" cy="4" r="2.2" fill="#fff"/><circle cx="2.5" cy="3" r="2.2" fill="#fff"/>
</g>
<g transform="translate(271,297)">
<path d="M-11,1 A11,11 0 1,1 11,1 C9,7 4,9 0,13 C-4,9 -9,7 -11,1 Z" fill="#2a7ae2" stroke="#fff" stroke-width="1.6"/>
<path d="M-6,-5 H-4 L-2,2 H5 L6,-3 H-3" stroke="#fff" stroke-width="1.6" fill="none"/><circle cx="-1" cy="5" r="1.3" fill="#fff"/><circle cx="4" cy="5" r="1.3" fill="#fff"/>
</g>
<g transform="translate(75,321)">
<path d="M-11,1 A11,11 0 1,1 11,1 C9,7 4,9 0,13 C-4,9 -9,7 -11,1 Z" fill="#a667e4" stroke="#fff" stroke-width="1.6"/>
<path d="M0,-7 V6 M-5,-3 H5" stroke="#fff" stroke-width="2.4"/>
</g>
<g transform="translate(224,372)">
<path d="M-11,1 A11,11 0 1,1 11,1 C9,7 4,9 0,13 C-4,9 -9,7 -11,1 Z" fill="#7d8b97" stroke="#fff" stroke-width="1.6"/>
<path d="M0,-7 V6 M-5,-3 H5" stroke="#fff" stroke-width="2.4"/>
</g>
<g transform="translate(336,332)">
<path d="M-11,1 A11,11 0 1,1 11,1 C9,7 4,9 0,13 C-4,9 -9,7 -11,1 Z" fill="#a667e4" stroke="#fff" stroke-width="1.6"/>
<path d="M-6,-2 L0,-6 L6,-2 Z M-5,-1 H5 V5 H-5 Z" fill="#fff"/><rect x="-3" y="0" width="1.4" height="4" fill="#a667e4"/><rect x="1.6" y="0" width="1.4" height="4" fill="#a667e4"/>
</g>
<g transform="translate(480,300)">
<path d="M-11,1 A11,11 0 1,1 11,1 C9,7 4,9 0,13 C-4,9 -9,7 -11,1 Z" fill="#1e8e5a" stroke="#fff" stroke-width="1.6"/>
<ellipse cx="0" cy="3" rx="4.5" ry="3.2" fill="#fff"/><circle cx="-5" cy="-2" r="1.8" fill="#fff"/><circle cx="-2" cy="-5" r="1.8" fill="#fff"/><circle cx="2" cy="-5" r="1.8" fill="#fff"/><circle cx="5" cy="-2" r="1.8" fill="#fff"/>
</g>
<g transform="translate(833,173)">
<path d="M-11,1 A11,11 0 1,1 11,1 C9,7 4,9 0,13 C-4,9 -9,7 -11,1 Z" fill="#1e8e5a" stroke="#fff" stroke-width="1.6"/>
<path d="M-6,0 A6,6 0 0,1 6,-4 Z" fill="#fff"/><path d="M-4,6 L2,-3" stroke="#fff" stroke-width="1.6"/>
</g>
<g transform="translate(802,222)">
<path d="M-11,1 A11,11 0 1,1 11,1 C9,7 4,9 0,13 C-4,9 -9,7 -11,1 Z" fill="#f07f2e" stroke="#fff" stroke-width="1.6"/>
<path d="M-5,-6 V-2 C-5,0 -4.5,0.5 -3,0.5 C-1.5,0.5 -1,0 -1,-2 V-6 M-3,-6 V-2 M-3,0 V6.5" stroke="#fff" stroke-width="1.3" fill="none"/><path d="M2.5,6.5 V-6 C5.5,-5 5.5,0 4.2,1.5 V6.5 Z" fill="#fff"/>
</g>
<g transform="translate(769,345)">
<path d="M-11,1 A11,11 0 1,1 11,1 C9,7 4,9 0,13 C-4,9 -9,7 -11,1 Z" fill="#a667e4" stroke="#fff" stroke-width="1.6"/>
<path d="M-5,-2 H5 V5 H-5 Z M-2,-7 H2 V-2 H-2 Z" fill="#fff"/><rect x="-1.5" y="0" width="3" height="3" fill="#a667e4"/>
</g>
<g transform="translate(810,345)">
<path d="M-11,1 A11,11 0 1,1 11,1 C9,7 4,9 0,13 C-4,9 -9,7 -11,1 Z" fill="#7d8b97" stroke="#fff" stroke-width="1.6"/>
<circle cx="0" cy="0" r="3.5" fill="#fff"/>
</g>
<g transform="translate(648,376)">
<path d="M-11,1 A11,11 0 1,1 11,1 C9,7 4,9 0,13 C-4,9 -9,7 -11,1 Z" fill="#e2525a" stroke="#fff" stroke-width="1.6"/>
<text x="0" y="5.5" font-size="15" font-weight="bold" fill="#fff" text-anchor="middle">H</text>
</g>
<g transform="translate(681,378)">
<path d="M-11,1 A11,11 0 1,1 11,1 C9,7 4,9 0,13 C-4,9 -9,7 -11,1 Z" fill="#1e8e5a" stroke="#fff" stroke-width="1.6"/>
<path d="M-6,0 A6,6 0 0,1 6,-4 Z" fill="#fff"/><path d="M-4,6 L2,-3" stroke="#fff" stroke-width="1.6"/>
</g>
<g transform="translate(711,288)">
<path d="M-11,1 A11,11 0 1,1 11,1 C9,7 4,9 0,13 C-4,9 -9,7 -11,1 Z" fill="#a667e4" stroke="#fff" stroke-width="1.6"/>
<rect x="-5" y="-5" width="10" height="10" rx="1.5" fill="#fff"/><circle cx="-2" cy="-2" r="1" fill="#a667e4"/><circle cx="2" cy="2" r="1" fill="#a667e4"/>
</g>
<g transform="translate(5,395)">
<path d="M-11,1 A11,11 0 1,1 11,1 C9,7 4,9 0,13 C-4,9 -9,7 -11,1 Z" fill="#a667e4" stroke="#fff" stroke-width="1.6"/>
<path d="M-6,-2 L0,-6 L6,-2 Z M-5,-1 H5 V5 H-5 Z" fill="#fff"/><rect x="-3" y="0" width="1.4" height="4" fill="#a667e4"/><rect x="1.6" y="0" width="1.4" height="4" fill="#a667e4"/>
</g>
<g transform="translate(465,180)"><path d="M-12.5,-13 H12.5 V11 H4 L0,15 L-4,11 H-12.5 Z" fill="#5bb74a" stroke="#3f9a35" stroke-width="0.8"/><path d="M-6,-8 V8 M-8,8 H-2" stroke="#fff" stroke-width="1.5"/><path d="M-6,-8 L7,-3 L-6,1 Z" fill="#fff"/></g>
<circle cx="475" cy="74" r="5.5" fill="#3d8fe6" stroke="#fff" stroke-width="1"/><path d="M472,76 L476,72 L478,74" stroke="#fff" stroke-width="1.4" fill="none"/>
<circle cx="510" cy="195" r="5.5" fill="#3d8fe6" stroke="#fff" stroke-width="1"/><path d="M507,197 L511,193 L513,195" stroke="#fff" stroke-width="1.4" fill="none"/>
<circle cx="590" cy="276" r="5.5" fill="#3d8fe6" stroke="#fff" stroke-width="1"/><path d="M587,278 L591,274 L593,276" stroke="#fff" stroke-width="1.4" fill="none"/>
<path d="M197,54.5 L203.5,61 L197,67.5 L190.5,61 Z" fill="#f39237" stroke="#fff" stroke-width="1" stroke-linejoin="round"/><path d="M194,63 V59 L197,62 L200,59 V63" fill="none" stroke="#fff" stroke-width="1.3"/>
<path d="M107,44.5 L113.5,51 L107,57.5 L100.5,51 Z" fill="#f39237" stroke="#fff" stroke-width="1" stroke-linejoin="round"/><path d="M104,53 V49 L107,52 L110,49 V53" fill="none" stroke="#fff" stroke-width="1.3"/>
<path d="M145,231.5 L151.5,238 L145,244.5 L138.5,238 Z" fill="#f39237" stroke="#fff" stroke-width="1" stroke-linejoin="round"/><path d="M142,240 V236 L145,239 L148,236 V240" fill="none" stroke="#fff" stroke-width="1.3"/>
<path d="M277,383.5 L283.5,390 L277,396.5 L270.5,390 Z" fill="#f39237" stroke="#fff" stroke-width="1" stroke-linejoin="round"/><path d="M274,392 V388 L277,391 L280,388 V392" fill="none" stroke="#fff" stroke-width="1.3"/>
<path d="M7,170.5 L13.5,177 L7,183.5 L0.5,177 Z" fill="#f39237" stroke="#fff" stroke-width="1" stroke-linejoin="round"/><path d="M4,179 V175 L7,178 L10,175 V179" fill="none" stroke="#fff" stroke-width="1.3"/>
<path d="M622,256.5 L628.5,263 L622,269.5 L615.5,263 Z" fill="#f39237" stroke="#fff" stroke-width="1" stroke-linejoin="round"/><path d="M619,265 V261 L622,264 L625,261 V265" fill="none" stroke="#fff" stroke-width="1.3"/>
<circle cx="919" cy="219" r="3" fill="#e9f6fb"/>
</svg>
<div class="abs" style="left:10px;top:10px;width:168px;height:40px;background:#fff;border-radius:2px;box-shadow:0 1px 4px -1px rgba(0,0,0,.3)"></div>
<div class="abs" style="left:79px;top:10px;width:1px;height:40px;background:#e6e6e6"></div>
<div class="abs" style="left:27px;top:18px;font-size:18px;line-height:24px;font-weight:bold;color:#000">Map</div>
<div class="abs" style="left:96px;top:18px;font-size:18px;line-height:24px;color:#565656">Satellite</div>
<div class="abs" style="left:188px;top:10px;width:38px;height:38px;background:#fff;border-radius:2px;box-shadow:0 1px 4px -1px rgba(0,0,0,.3)">
<svg class="abs" style="left:6px;top:6px" width="26" height="26" viewBox="0 0 26 26"><circle cx="13" cy="13" r="8" fill="none" stroke="#666" stroke-width="2"/><circle cx="13" cy="13" r="5" fill="#666"/><path d="M13 2 V6 M13 20 V24 M2 13 H6 M20 13 H24" stroke="#666" stroke-width="2"/></svg></div>
<div class="abs" style="left:248px;top:10px;width:399px;height:37px;background:#fff;border-radius:2px;border:1px solid #d6d6d6;box-shadow:0 1px 2px rgba(0,0,0,.12)"></div>
<div class="abs" style="left:262px;top:18px;font-size:16px;line-height:24px;color:#757575">Location</div>
<div class="abs" style="left:880px;top:10px;width:40px;height:40px;background:#fff;border-radius:2px;box-shadow:0 1px 4px -1px rgba(0,0,0,.3)">
<svg class="abs" style="left:11px;top:11px" width="18" height="18" viewBox="0 0 18 18"><path d="M0 6 V0 H6 M12 0 H18 V6 M18 12 V18 H12 M6 18 H0 V12" fill="none" stroke="#666" stroke-width="2.2"/></svg></div>
<div class="abs" style="left:880px;top:264px;width:40px;height:40px;background:#fff;border-radius:50%;box-shadow:0 1px 4px -1px rgba(0,0,0,.3)">
<svg class="abs" style="left:9px;top:9px" width="22" height="22" viewBox="0 0 22 22"><path d="M7.5 4.5 L11 1.5 L14.5 4.5 M7.5 17.5 L11 20.5 L14.5 17.5 M4.5 7.5 L1.5 11 L4.5 14.5 M17.5 7.5 L20.5 11 L17.5 14.5" fill="none" stroke="#555" stroke-width="2.6"/></svg></div>
<div class="abs" style="left:880px;top:336px;width:40px;height:40px;background:#fff;border-radius:2px;box-shadow:0 1px 4px -1px rgba(0,0,0,.3)">
<svg class="abs" style="left:10px;top:5px" width="20" height="30" viewBox="0 0 20 30"><circle cx="10" cy="5" r="4.5" fill="#fdbc05" stroke="#e29d00" stroke-width="0.8"/><path d="M4 11 Q10 8 16 11 L17 20 H14 L13.5 29 H11 L10 21 L9 29 H6.5 L6 20 H3 Z" fill="#fdbc05" stroke="#e29d00" stroke-width="0.8"/><path d="M7 10 L10 13 L13 10" fill="none" stroke="#d9534f" stroke-width="1"/></svg></div>
<div class="abs" style="left:9px;top:376px;font-size:18px;line-height:20px;font-weight:bold;font-family:'Liberation Sans',sans-serif;letter-spacing:-0.8px;text-shadow:0 0 1px #fff,0 0 2px #fff"><span style="color:#4285f4">G</span><span style="color:#ea4335">o</span><span style="color:#fbbc05">o</span><span style="color:#4285f4">g</span><span style="color:#34a853">l</span><span style="color:#ea4335">e</span></div>
<div class="abs" style="left:478px;top:387px;width:452px;height:13px;background:rgba(255,255,255,.5)"></div><div class="abs" style="left:794px;top:388px;width:1px;height:11px;background:rgba(0,0,0,.12)"></div><div class="abs" style="left:834px;top:388px;width:1px;height:11px;background:rgba(0,0,0,.12)"></div>
<div class="abs" style="left:483px;top:388px;font-size:10px;line-height:12px;color:#000;white-space:nowrap">Keyboard shortcuts</div>
<div class="abs" style="left:582px;top:388px;font-size:10px;line-height:12px;color:#000;white-space:nowrap">Map data ©2026 Google, Inst. Geogr. Nacional</div>
<div class="abs" style="left:800px;top:388px;font-size:10px;line-height:12px;color:#000;white-space:nowrap">Terms</div>
<div class="abs" style="left:840px;top:388px;font-size:10px;line-height:12px;color:#000;white-space:nowrap">Report a map error</div>

</div>

<style>
.ed{position:absolute;left:15px;top:877px;width:1890px;height:208px;border:1px solid #9e9e9e;background:#fff;font-family:"Liberation Sans",sans-serif}
.tb{position:absolute;left:0;top:0;width:1888px;height:68px;background:linear-gradient(#fdfdfd,#dcdcdc);border-bottom:1px solid #9e9e9e}
.bg{position:absolute;height:30px;border:1px solid rgba(0,0,0,.12);border-bottom-color:rgba(0,0,0,.25);border-radius:3px;background:linear-gradient(#fff,#d9d9d9);box-shadow:inset 0 1px 0 rgba(255,255,255,.2),0 1px 2px rgba(0,0,0,.05)}
.bt{position:absolute;font-size:14px;line-height:20px;color:#333;white-space:nowrap}
.ct{position:absolute;width:0;height:0;border-left:4px solid transparent;border-right:4px solid transparent;border-top:4px solid #333}
.sb{position:absolute;left:0;top:168px;width:1888px;height:38px;background:linear-gradient(#fdfdfd,#dcdcdc);border-top:1px solid #9e9e9e}
</style>
<div class="ed">
<div class="tb">
<div class="bg" style="left:2px;top:3px;width:73px"></div>
<div class="bg" style="left:78px;top:3px;width:37px"></div>
<div class="bg" style="left:118.5px;top:3px;width:86.5px"></div>
<div class="bg" style="left:208px;top:3px;width:123px"></div>
<div class="bg" style="left:334px;top:3px;width:195px"></div>
<div class="bg" style="left:532px;top:3px;width:145px"></div>
<div class="bg" style="left:2px;top:35px;width:169px"></div>
<div class="bg" style="left:174.5px;top:35px;width:73.0px"></div>
<div class="bg" style="left:250.5px;top:35px;width:37.0px"></div>
<div class="bg" style="left:290.5px;top:35px;width:205.0px"></div>
</div>
<svg style="position:absolute;left:0;top:0" width="700" height="68" viewBox="16 878 700 68">
<path d="M29.5,893.5 L36,887.5 V891 C41.5,891 45,894.5 43.5,902.5 C42,898 39.5,896.5 36,896.5 V899.5 Z" fill="#a0a0a0"/>
<path d="M78.5,893.5 L72,887.5 V891 C66.5,891 63,894.5 64.5,902.5 C66,898 68.5,896.5 72,896.5 V899.5 Z" fill="#a0a0a0"/>
<rect x="105.5" y="888.5" width="16" height="15" fill="none" stroke="#222" stroke-width="1.4"/>
<path d="M108.5,891.5 H118.5 V895 H108.5 Z M108.5,897 H118.5 V900.5 H108.5 Z" fill="none" stroke="#222" stroke-width="1" stroke-dasharray="2,1"/>
</svg>
<div class="bt" style="left:129px;top:8px">Formats</div><div class="ct" style="left:186px;top:16px"></div>
<div class="bt" style="left:218px;top:8px">Font Family</div><div class="ct" style="left:314px;top:16px"></div>
<div class="bt" style="left:344px;top:8px">Font Sizes</div><div class="ct" style="left:440px;top:16px"></div>
<svg style="position:absolute;left:0;top:0" width="1000" height="68" viewBox="16 878 1000 68">
<text x="483.5" y="903.5" font-size="18" font-weight="bold" fill="#333" font-family="Liberation Sans">B</text>
<text x="518.5" y="903" font-size="19" font-style="italic" font-weight="bold" fill="#333" font-family="Liberation Serif">I</text>
<rect x="558" y="889.0" width="16" height="1.9" fill="#333"/>
<rect x="558" y="892.4" width="11" height="1.9" fill="#333"/>
<rect x="558" y="895.8" width="16" height="1.9" fill="#333"/>
<rect x="558" y="899.2" width="11" height="1.9" fill="#333"/>
<rect x="558" y="902.6" width="16" height="1.9" fill="#333"/>
<rect x="594" y="889.0" width="16" height="1.9" fill="#333"/>
<rect x="596.5" y="892.4" width="11" height="1.9" fill="#333"/>
<rect x="594" y="895.8" width="16" height="1.9" fill="#333"/>
<rect x="596.5" y="899.2" width="11" height="1.9" fill="#333"/>
<rect x="594" y="902.6" width="16" height="1.9" fill="#333"/>
<rect x="630" y="889.0" width="16" height="1.9" fill="#333"/>
<rect x="635" y="892.4" width="11" height="1.9" fill="#333"/>
<rect x="630" y="895.8" width="16" height="1.9" fill="#333"/>
<rect x="635" y="899.2" width="11" height="1.9" fill="#333"/>
<rect x="630" y="902.6" width="16" height="1.9" fill="#333"/>
<rect x="666" y="889.0" width="16" height="1.9" fill="#333"/>
<rect x="666" y="892.4" width="16" height="1.9" fill="#333"/>
<rect x="666" y="895.8" width="16" height="1.9" fill="#333"/>
<rect x="666" y="899.2" width="16" height="1.9" fill="#333"/>
<rect x="666" y="902.6" width="16" height="1.9" fill="#333"/>
<g transform="translate(0,1)">
<circle cx="32.5" cy="921.5" r="1.9" fill="#333"/><rect x="36" y="920.5" width="9" height="2" fill="#333"/>
<circle cx="32.5" cy="927.5" r="1.9" fill="#333"/><rect x="36" y="926.5" width="9" height="2" fill="#333"/>
<circle cx="32.5" cy="933.5" r="1.9" fill="#333"/><rect x="36" y="932.5" width="9" height="2" fill="#333"/>
<path d="M54,926 H62 L58,930 Z" fill="#333"/>
<text x="78.5" y="924.0" font-size="6.5" fill="#333" font-family="Liberation Sans" font-weight="bold">1</text><rect x="85" y="920.5" width="9" height="2" fill="#333"/>
<text x="78.5" y="929.6" font-size="6.5" fill="#333" font-family="Liberation Sans" font-weight="bold">2</text><rect x="85" y="926.5" width="9" height="2" fill="#333"/>
<text x="78.5" y="935.2" font-size="6.5" fill="#333" font-family="Liberation Sans" font-weight="bold">3</text><rect x="85" y="932.5" width="9" height="2" fill="#333"/>
<path d="M101,926 H109 L105,930 Z" fill="#333"/>
<rect x="124" y="920" width="16" height="2" fill="#333"/><rect x="130" y="924" width="10" height="2" fill="#333"/><rect x="130" y="928" width="10" height="2" fill="#333"/><rect x="124" y="932" width="16" height="2" fill="#333"/>
<path d="M124,927 L128,924 V930 Z" fill="#333"/>
<rect x="160" y="920" width="16" height="2" fill="#333"/><rect x="166" y="924" width="10" height="2" fill="#333"/><rect x="166" y="928" width="10" height="2" fill="#333"/><rect x="160" y="932" width="16" height="2" fill="#333"/>
<path d="M164,927 L160,924 V930 Z" fill="#333"/>
<g fill="none" stroke="#333" stroke-width="1.8"><path d="M203,931 L206,928 M205,935 C202,938 198,934 201,931 L204,928 C206,926 208,927 209,928"/><path d="M211,924 C214,921 218,925 215,928 L212,931 C210,933 208,932 207,931"/></g>
<rect x="236.5" y="920.5" width="15" height="13" fill="none" stroke="#333" stroke-width="1.4"/><path d="M238,932 L242,925 L245,929 L247,927 L250,932 Z" fill="#333"/><circle cx="248" cy="923.5" r="1.3" fill="#333"/>
<path d="M276,928 C280,921 289,921 293,928 C289,935 280,935 276,928 Z" fill="none" stroke="#333" stroke-width="1.6"/><circle cx="284.5" cy="927.5" r="3" fill="#333"/>
<text x="318.5" y="933" font-size="15" fill="#333" font-family="Liberation Sans">A</text><rect x="317" y="935" width="15" height="2" fill="#777"/>
<path d="M342,926 H350 L346,930 Z" fill="#333"/>
<rect x="364" y="919" width="16" height="17" fill="#a9a9a9"/><text x="366.5" y="933" font-size="15" fill="#333" font-family="Liberation Sans">A</text><rect x="364" y="935" width="16" height="2" fill="#888"/>
<path d="M390,926 H398 L394,930 Z" fill="#333"/>
<circle cx="421" cy="928" r="7.2" fill="none" stroke="#333" stroke-width="1.6"/><circle cx="418.5" cy="925.5" r="1.2" fill="#333"/><circle cx="423.5" cy="925.5" r="1.2" fill="#333"/><path d="M417,929 C418.5,932.5 423.5,932.5 425,929" fill="none" stroke="#333" stroke-width="1.5"/>
<path d="M453.5,924.5 L450.5,927.5 L453.5,930.5 M460.5,924.5 L463.5,927.5 L460.5,930.5" fill="none" stroke="#333" stroke-width="1.5"/>
<g fill="#333"><path d="M485,920 H491 L489,922 L492,925 L490,927 L487,924 L485,926 Z"/><path d="M501,920 H495 L497,922 L494,925 L496,927 L499,924 L501,926 Z"/><path d="M485,936 H491 L489,934 L492,931 L490,929 L487,932 L485,930 Z"/><path d="M501,936 H495 L497,934 L494,931 L496,929 L499,932 L501,930 Z"/></g>
</g>
</svg>
<div style="position:absolute;left:0px;top:78px;font-size:39px;line-height:44px;font-weight:bold;color:#333;white-space:nowrap;letter-spacing:0px">Write some text here</div>
<div class="sb"><div style="position:absolute;left:10px;top:12px;font-size:13px;line-height:16px;color:#333">h1</div>
<svg style="position:absolute;right:3px;bottom:3px" width="10" height="10" viewBox="0 0 10 10"><g fill="#555">
<rect x="8" y="0" width="1.2" height="1.2"/>
<rect x="6" y="2" width="1.2" height="1.2"/>
<rect x="8" y="2" width="1.2" height="1.2"/>
<rect x="4" y="4" width="1.2" height="1.2"/>
<rect x="6" y="4" width="1.2" height="1.2"/>
<rect x="8" y="4" width="1.2" height="1.2"/>
<rect x="2" y="6" width="1.2" height="1.2"/>
<rect x="4" y="6" width="1.2" height="1.2"/>
<rect x="6" y="6" width="1.2" height="1.2"/>
<rect x="8" y="6" width="1.2" height="1.2"/>
<rect x="0" y="8" width="1.2" height="1.2"/>
<rect x="2" y="8" width="1.2" height="1.2"/>
<rect x="4" y="8" width="1.2" height="1.2"/>
<rect x="6" y="8" width="1.2" height="1.2"/>
<rect x="8" y="8" width="1.2" height="1.2"/>
</g></svg></div>
</div>

<div class="abs" style="left:15px;top:1085px;width:68px;height:31px;background:#383d47;border-radius:4px;color:#fff;font-size:14px;line-height:31px;padding-top:2px;text-align:center;-webkit-text-stroke:0.45px #fff">Preview</div>
<div class="abs" style="left:88px;top:1088px;font-size:16px;line-height:24px;color:#212529">0.00 Mb</div>
<div class="abs" style="left:15px;top:1132px;width:61px;height:38px;background:#383d47;border-radius:4px;color:#fff;font-size:16px;line-height:38px;padding-top:1px;text-align:center">Save</div>
<div class="abs" style="left:80px;top:1132px;width:76px;height:38px;background:#ffc107;border-radius:4px;color:#212529;font-size:16px;line-height:38px;padding-top:1px;text-align:center">Cancel</div>
</body></html>
